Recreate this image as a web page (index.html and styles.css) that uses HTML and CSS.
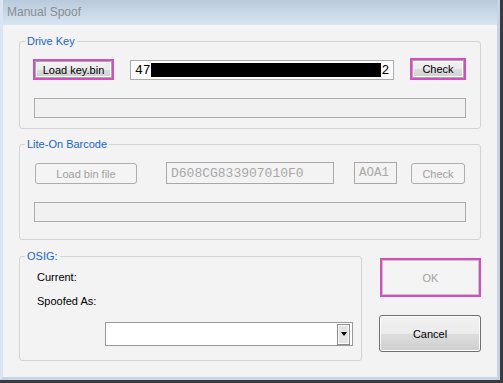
FILE: index.html
```html
<!DOCTYPE html>
<html lang="en">
<head>
  <meta charset="UTF-8">
  <title>Manual Spoof</title>
  <link rel="stylesheet" href="styles.css">
</head>
<body>

  <!-- Dialog window -->
  <div class="window">
    <div class="frame">
      <div class="titlebar">Manual Spoof</div>

      <div class="client">

        <!-- Drive Key -->
        <fieldset class="group group-key">
          <legend>Drive Key</legend>
          <div class="group-body">
            <div class="row">
              <button class="btn hl btn-loadkey">Load key.bin</button>
              <div class="field key-field"><span>47</span><span class="redact"></span><span>2</span></div>
              <button class="btn hl btn-check">Check</button>
            </div>
            <div class="progress"></div>
          </div>
        </fieldset>

        <!-- Lite-On Barcode -->
        <fieldset class="group group-barcode">
          <legend>Lite-On Barcode</legend>
          <div class="group-body">
            <div class="row">
              <button class="btn btn-disabled btn-loadbin">Load bin file</button>
              <div class="field field-disabled barcode-field">D608CG833907010F0</div>
              <div class="field field-disabled rev-field">AOA1</div>
              <button class="btn btn-disabled btn-check2">Check</button>
            </div>
            <div class="progress"></div>
          </div>
        </fieldset>

        <!-- OSIG + dialog buttons -->
        <div class="bottom">
          <fieldset class="group group-osig">
            <legend>OSIG:</legend>
            <div class="group-body">
              <div class="label">Current:</div>
              <div class="label label-spoof">Spoofed As:</div>
              <div class="combo">
                <span class="combo-btn"><span class="arrow"></span></span>
              </div>
            </div>
          </fieldset>

          <div class="actions">
            <button class="btn-ok">OK</button>
            <button class="btn btn-cancel">Cancel</button>
          </div>
        </div>

      </div>
    </div>
  </div>

</body>
</html>
```

FILE: styles.css
```css
/* Global */
body {
  margin: 0;
  font-family: "Liberation Sans", Arial, sans-serif;
  font-size: 11px;
  color: #000;
}

* {
  box-sizing: border-box;
}

/* Window frame */
.window {
  width: 503px;
  height: 383px;
  border-right: 3px solid #3b3b3b;
  border-bottom: 3px solid #3b3b3b;
}

.frame {
  height: 100%;
  display: flex;
  flex-direction: column;
  border-left: 3px solid #d9e5f2;
  border-right: 3px solid #c3d4e7;
  border-bottom: 3px solid #c6d6e8;
}

.titlebar {
  flex: none;
  height: 25px;
  line-height: 25px;
  padding-left: 4px;
  font-size: 12px;
  color: #878c93;
  background: linear-gradient(#b9cadc, #d8e5f2);
}

.client {
  flex: 1;
  background-color: #f3f3f3;
  padding: 0 16px;
}

/* Group boxes */
.group {
  margin: 0;
  padding: 0;
  min-width: 0;
  border: 1px solid #d4d4d4;
  border-radius: 3px;
}

.group legend {
  margin-left: 5px;
  padding: 0 2px;
  font-size: 11px;
  line-height: 13px;
  color: #1766cc;
}

.group-key {
  margin-top: 10px;
}

.group-key .group-body {
  padding: 10px 0 10px 0;
}

.group-barcode {
  margin-top: 9px;
}

.group-barcode .group-body {
  padding: 11px 0 17px 0;
}

.row {
  display: flex;
  align-items: flex-end;
  height: 22px;
}

/* Buttons */
.btn {
  font-family: inherit;
  font-size: 11px;
  padding: 0;
  color: #000;
  border: 1px solid #707070;
  border-radius: 3px;
  box-shadow: inset 0 0 0 1px #fcfcfc;
  background: linear-gradient(#f2f2f2 0%, #ebebeb 50%, #dddddd 51%, #cfcfcf 100%);
}

.hl {
  border: 2px solid #d64dc0;
  border-radius: 0;
  box-shadow: inset 0 0 0 1px #a8a8a8, inset 0 0 0 2px #fafafa;
}

.btn-loadkey {
  width: 81px;
  height: 21px;
  margin-left: 13px;
}

.btn-check {
  width: 56px;
  height: 22px;
  margin-left: 16px;
}

.btn-disabled {
  color: #a0a0a0;
  border-color: #adadad;
  background: #f4f4f4;
  box-shadow: none;
}

.btn-loadbin {
  width: 102px;
  height: 21px;
  margin-left: 15px;
}

.btn-check2 {
  width: 54px;
  height: 21px;
  margin-left: 14px;
}

/* Text fields */
.field {
  display: flex;
  align-items: center;
  padding-left: 4px;
  font-family: "Liberation Mono", "Courier New", monospace;
  font-size: 13px;
  white-space: nowrap;
  overflow: hidden;
  border: 1px solid #ababab;
  background-color: #fff;
}

.key-field {
  width: 264px;
  height: 20px;
  margin-left: 16px;
}

.redact {
  display: inline-block;
  width: 230px;
  height: 14px;
  margin-right: 1px;
  background-color: #000;
}

.field-disabled {
  height: 22px;
  color: #a8a8a8;
  border-color: #a8a8a8;
  background-color: #f3f3f3;
}

.barcode-field {
  width: 168px;
  margin-left: 29px;
}

.rev-field {
  width: 43px;
  margin-left: 20px;
  font-size: 12.5px;
}

/* Progress bars */
.progress {
  width: 432px;
  height: 20px;
  margin: 18px 0 0 14px;
  border: 1px solid #adadad;
  background-color: #f1f1f1;
}

/* OSIG section */
.bottom {
  display: flex;
  margin-top: 10px;
}

.group-osig {
  width: 343px;
  flex: none;
}

.group-osig .group-body {
  padding: 8px 0 14px 17px;
}

.label {
  line-height: 13px;
}

.label-spoof {
  margin-top: 11px;
}

.combo {
  display: flex;
  align-items: center;
  justify-content: flex-end;
  width: 248px;
  height: 24px;
  margin: 14px 0 0 68px;
  padding-right: 2px;
  border: 1px solid #999;
  background-color: #fff;
}

.combo-btn {
  display: flex;
  align-items: center;
  justify-content: center;
  width: 13px;
  height: 21px;
  border: 1px solid #8e8e8e;
  box-shadow: inset 0 0 0 1px #f8f8f8;
  background-color: #e4e4e4;
}

.arrow {
  width: 0;
  height: 0;
  border-left: 3.5px solid transparent;
  border-right: 3.5px solid transparent;
  border-top: 4px solid #000;
}

/* Dialog buttons */
.actions {
  display: flex;
  flex-direction: column;
  width: 102px;
  margin-left: 17px;
}

.btn-ok {
  width: 101px;
  height: 39px;
  margin: 8px 0 0 1px;
  padding: 0;
  font-family: inherit;
  font-size: 11px;
  color: #a3a3a3;
  border: 2px solid #d64dc0;
  box-shadow: inset 0 0 0 1px #c4c4c4;
  background-color: #f4f4f4;
}

.btn-cancel {
  width: 102px;
  height: 37px;
  margin-top: 18px;
}
```
